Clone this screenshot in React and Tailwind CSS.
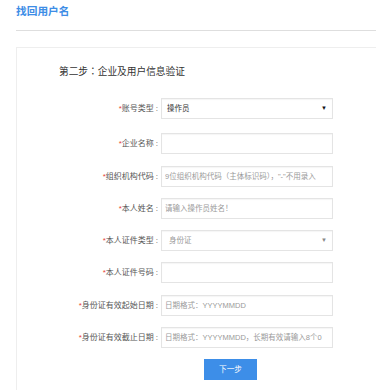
import React from "react";

const rows = [
  { label: "账号类型", kind: "select", value: "操作员", dark: true, mt: "mt-0" },
  { label: "企业名称", kind: "input", placeholder: "", mt: "mt-[14px]" },
  { label: "组织机构代码", kind: "input", placeholder: "9位组织机构代码（主体标识码），\"-\"不用录入", mt: "mt-[12px]" },
  { label: "本人姓名", kind: "input", placeholder: "请输入操作员姓名！", mt: "mt-[11px]" },
  { label: "本人证件类型", kind: "select", value: "身份证", dark: false, mt: "mt-[11px]" },
  { label: "本人证件号码", kind: "input", placeholder: "", mt: "mt-[11px]" },
  { label: "身份证有效起始日期", kind: "input", placeholder: "日期格式：YYYYMMDD", mt: "mt-[12px]" },
  { label: "身份证有效截止日期", kind: "input", placeholder: "日期格式：YYYYMMDD，长期有效请输入8个0", mt: "mt-[11px]" },
];

function Field({ row }) {
  const box =
    "h-[21px] w-[172px] border border-[#e4e4e4] bg-white shadow-[inset_0_1px_1px_rgba(0,0,0,0.04)]";
  if (row.kind === "select") {
    return (
      <div className={`${box} flex items-center justify-between pr-[5px] ${row.dark ? "pl-[5px]" : "pl-[7px]"}`}>
        <span className={`text-[7.5px] ${row.dark ? "text-[#333]" : "text-[#999]"}`}>{row.value}</span>
        <span className={`text-[6px] ${row.dark ? "text-[#111]" : "text-[#888]"}`}>▼</span>
      </div>
    );
  }
  return (
    <input
      readOnly
      placeholder={row.placeholder}
      className={`${box} pl-[3px] text-[7.5px] outline-none placeholder:text-[#9a9a9a]`}
    />
  );
}

export default function App() {
  return (
    <div className="h-[390px] w-full overflow-hidden bg-white pl-4 pt-[3px] font-['Liberation_Sans','Noto_Sans_CJK_SC',sans-serif]">
      {/* Page title */}
      <h1 className="text-[10.7px] font-bold leading-[16px] text-[#3d8de6]">找回用户名</h1>
      <div className="mt-[11px] h-px bg-[#dedede]" />

      {/* Card */}
      <div className="mt-4 w-[420px] border border-[#eeeeee] pb-10 pt-4">
        <p className="pl-[42px] text-[9.7px] leading-[14px] text-[#333]">
          第二步<span className="font-['Noto_Sans_CJK_TC',sans-serif]">：</span>企业及用户信息验证
        </p>

        <div className="mt-[19px] flex flex-col">
          {rows.map((row) => (
            <div key={row.label} className={`flex items-center ${row.mt}`}>
              <div className="w-[144px] pr-[3px] text-right text-[8px] leading-[21px] text-[#555]">
                <span className="text-[#e8423b]">*</span>
                {row.label}
                <span className="ml-[2px]">:</span>
              </div>
              <Field row={row} />
            </div>
          ))}
        </div>

        <button className="ml-[187px] mt-[11px] h-[21px] w-[53px] bg-[#3d8ee8] text-[7.7px] text-white">
          下一步
        </button>
      </div>
    </div>
  );
}
